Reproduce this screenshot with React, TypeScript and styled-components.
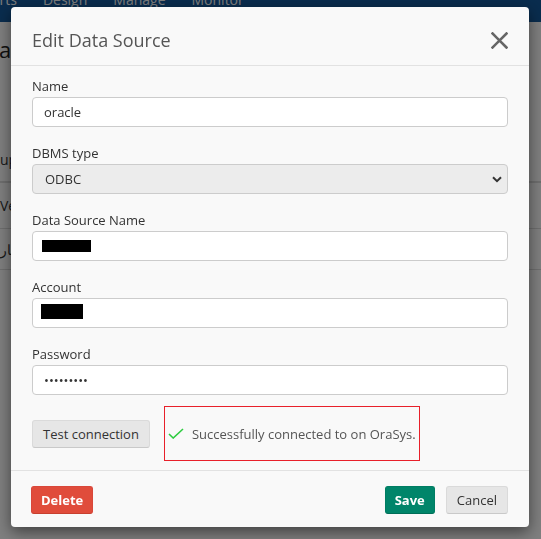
import styled, { createGlobalStyle } from "styled-components";

const GlobalStyle = createGlobalStyle`
  html, body {
    margin: 0;
    padding: 0;
    overflow: hidden;
    background: #fff;
    font-family: "Open Sans", "Liberation Sans", sans-serif;
  }
  * { box-sizing: border-box; }
`;

const Page = styled.div`
  width: 541px;
  height: 539px;
  overflow: hidden;
  background: #fff;
`;

const NavBar = styled.nav`
  height: 22px;
  background: #14599c;
  overflow: hidden;
`;

const NavList = styled.ul`
  display: flex;
  gap: 26px;
  list-style: none;
  margin: -10px 0 0 -34px;
  padding: 0;
`;

const NavItem = styled.li`
  font-size: 14px;
  line-height: 20px;
  color: #fafafa;
  white-space: nowrap;
`;

const Content = styled.main`
  padding-top: 14px;
`;

const PageTitle = styled.h1`
  margin: 0 0 0 -1px;
  font-size: 22px;
  line-height: 26px;
  font-weight: 400;
  color: #222;
  white-space: nowrap;
`;

const Table = styled.div`
  margin-top: 75px;
`;

const Row = styled.div<{ $head?: boolean; $h: number }>`
  height: ${p => p.$h}px;
  display: flex;
  align-items: center;
  border-bottom: ${p => (p.$head ? "2px solid #ddd" : "1px solid #ddd")};
  font-size: 14px;
  color: #333;
  white-space: nowrap;
`;

const Backdrop = styled.div`
  position: fixed;
  inset: 0;
  background: rgba(0, 0, 0, 0.5);
  display: flex;
  align-items: flex-start;
  padding: 7px 0 0 11px;
`;

const Modal = styled.div`
  width: 518px;
  background: #f9f9f9;
  border-radius: 4px;
  box-shadow: 0 5px 15px rgba(0, 0, 0, 0.5);
`;

const Header = styled.header`
  height: 59px;
  padding: 8px 21px 0 21px;
  display: flex;
  align-items: center;
  justify-content: space-between;
  border-bottom: 1px solid #e2e2e2;
`;

const Title = styled.h4`
  margin: 0;
  font-size: 18px;
  font-weight: 400;
  color: #555;
`;

const CloseButton = styled.button`
  border: 0;
  background: none;
  padding: 0;
  width: 17px;
  height: 17px;
  display: flex;
  cursor: pointer;
`;

const Body = styled.div`
  padding: 11px 21px 9px;
`;

const Group = styled.div<{ $last?: boolean }>`
  margin-bottom: ${p => (p.$last ? 11 : 17)}px;
`;

const Label = styled.label`
  display: block;
  font-size: 13px;
  line-height: 18px;
  color: #333;
  margin-bottom: 2px;
`;

const Input = styled.input`
  display: block;
  width: 100%;
  height: 30px;
  padding: 0 11px;
  border: 1px solid #ccc;
  border-radius: 4px;
  background: #fff;
  font-family: inherit;
  font-size: 13px;
  color: #333;
  outline: none;
`;

const FieldBox = styled.div<{ $pad: number }>`
  display: flex;
  align-items: center;
  width: 100%;
  height: 30px;
  padding: 0 ${p => p.$pad}px;
  border: 1px solid #ccc;
  border-radius: 4px;
  background: #fff;
`;

const Redaction = styled.span<{ $w: number; $h: number; $dy: number }>`
  display: block;
  width: ${p => p.$w}px;
  height: ${p => p.$h}px;
  margin-top: ${p => p.$dy}px;
  background: #000;
`;

const SelectWrap = styled.div`
  position: relative;
`;

const Select = styled.select`
  display: block;
  width: 100%;
  height: 30px;
  padding: 0 12px;
  border: 1px solid #ccc;
  border-radius: 4px;
  background: #ececec;
  font-family: inherit;
  font-size: 13px;
  color: #333;
  appearance: none;
  outline: none;
`;

const Chevron = styled.svg`
  position: absolute;
  right: 6px;
  top: 12px;
  pointer-events: none;
`;

const ActionRow = styled.div`
  display: flex;
  align-items: center;
  gap: 14px;
`;

type Variant = "default" | "danger" | "success";

const bg: Record<Variant, string> = { default: "#e6e6e6", danger: "#e04c3b", success: "#00856a" };
const edge: Record<Variant, string> = { default: "#dadada", danger: "#d9473a", success: "#007d63" };
const edgeBottom: Record<Variant, string> = { default: "#c9c9c9", danger: "#c7402f", success: "#006e58" };

const Button = styled.button<{ $variant?: Variant }>`
  height: 28px;
  padding: 0 ${p => (p.$variant && p.$variant !== "default" ? 9 : 10)}px;
  border-radius: 3px;
  font-family: inherit;
  font-size: 13px;
  cursor: pointer;
  white-space: nowrap;
  font-weight: ${p => (p.$variant && p.$variant !== "default" ? 700 : 400)};
  color: ${p => (p.$variant && p.$variant !== "default" ? "#fff" : "#333")};
  background: ${p => bg[p.$variant ?? "default"]};
  border: 1px solid ${p => edge[p.$variant ?? "default"]};
  border-bottom-color: ${p => edgeBottom[p.$variant ?? "default"]};
`;

const Result = styled.div`
  width: 256px;
  height: 55px;
  border: 1px solid #e8202a;
  display: flex;
  align-items: center;
  gap: 8px;
  padding-left: 3px;
  font-size: 13px;
  color: #555;
`;

const Footer = styled.footer`
  border-top: 1px solid #e2e2e2;
  padding: 15px 21px 13px 20px;
  display: flex;
  justify-content: space-between;
  align-items: center;
`;

const FooterRight = styled.div`
  display: flex;
  gap: 11px;
`;

function App() {
  return (
    <>
      <GlobalStyle />
      <Page>
        <NavBar>
          <NavList>
            <NavItem>Reports</NavItem>
            <NavItem>Design</NavItem>
            <NavItem>Manage</NavItem>
            <NavItem>Monitor</NavItem>
          </NavList>
        </NavBar>
        <Content>
          <PageTitle>ac Data Sources</PageTitle>
          <Table>
            <Row $head $h={46}>up</Row>
            <Row $h={46}>Ve</Row>
            <Row $h={41}>بار</Row>
          </Table>
        </Content>
      </Page>

      <Backdrop>
        <Modal>
          <Header>
            <Title>Edit Data Source</Title>
            <CloseButton aria-label="Close">
              <svg width="17" height="17" viewBox="0 0 17 17">
                <path d="M1.5 1.5 L15.5 15.5 M15.5 1.5 L1.5 15.5" stroke="#666" strokeWidth="2.6" strokeLinecap="square" />
              </svg>
            </CloseButton>
          </Header>

          <Body>
            <Group>
              <Label>Name</Label>
              <Input defaultValue="oracle" readOnly />
            </Group>
            <Group>
              <Label>DBMS type</Label>
              <SelectWrap>
                <Select defaultValue="ODBC">
                  <option>ODBC</option>
                </Select>
                <Chevron width="10" height="7" viewBox="0 0 10 7">
                  <path d="M1 1.2 L5 5.2 L9 1.2" fill="none" stroke="#333" strokeWidth="2" />
                </Chevron>
              </SelectWrap>
            </Group>
            <Group>
              <Label>Data Source Name</Label>
              <FieldBox $pad={9}>
                <Redaction $w={49} $h={12} $dy={0} />
              </FieldBox>
            </Group>
            <Group>
              <Label>Account</Label>
              <FieldBox $pad={8}>
                <Redaction $w={42} $h={15} $dy={-4} />
              </FieldBox>
            </Group>
            <Group $last>
              <Label>Password</Label>
              <Input type="password" defaultValue="123456789" readOnly />
            </Group>
            <ActionRow>
              <Button>Test connection</Button>
              <Result>
                <svg width="16" height="11" viewBox="0 0 16 11">
                  <path d="M1 6 L5.2 10 L15 1" fill="none" stroke="#2ecc40" strokeWidth="1.6" />
                </svg>
                Successfully connected to on OraSys.
              </Result>
            </ActionRow>
          </Body>

          <Footer>
            <Button $variant="danger">Delete</Button>
            <FooterRight>
              <Button $variant="success">Save</Button>
              <Button>Cancel</Button>
            </FooterRight>
          </Footer>
        </Modal>
      </Backdrop>
    </>
  );
}

export default App;
